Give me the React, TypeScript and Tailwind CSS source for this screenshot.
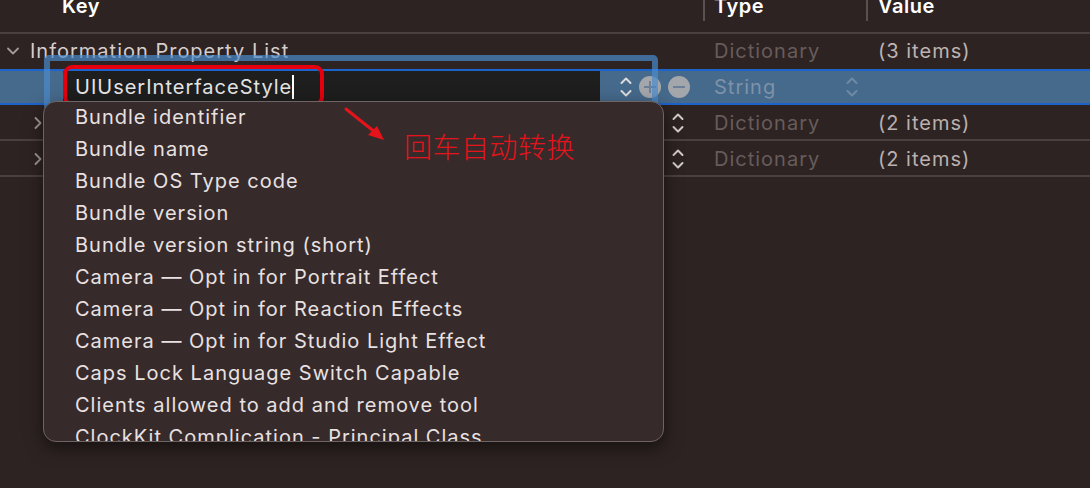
import React from "react";

const font = { fontFamily: '"Inter", "Noto Sans CJK SC", sans-serif' };

const Stepper = ({ color }: { color: string }) => (
  <svg width="14" height="24" viewBox="0 0 14 24" fill="none">
    <path d="M2.5 8 L7 3.5 L11.5 8" stroke={color} strokeWidth="2" strokeLinecap="round" strokeLinejoin="round" />
    <path d="M2.5 16 L7 20.5 L11.5 16" stroke={color} strokeWidth="2" strokeLinecap="round" strokeLinejoin="round" />
  </svg>
);

const Chevron = ({ dir, color }: { dir: "down" | "right"; color: string }) => (
  <svg width="14" height="14" viewBox="0 0 14 14" fill="none">
    {dir === "down" ? (
      <path d="M2 4.5 L7 9.5 L12 4.5" stroke={color} strokeWidth="1.8" strokeLinecap="round" strokeLinejoin="round" />
    ) : (
      <path d="M4.5 2 L9.5 7 L4.5 12" stroke={color} strokeWidth="1.8" strokeLinecap="round" strokeLinejoin="round" />
    )}
  </svg>
);

const items = [
  "Bundle identifier",
  "Bundle name",
  "Bundle OS Type code",
  "Bundle version",
  "Bundle version string (short)",
  "Camera — Opt in for Portrait Effect",
  "Camera — Opt in for Reaction Effects",
  "Camera — Opt in for Studio Light Effect",
  "Caps Lock Language Switch Capable",
  "Clients allowed to add and remove tool",
  "ClockKit Complication - Principal Class",
];

export default function App() {
  return (
    <div className="relative w-[1090px] h-[488px] overflow-hidden bg-[#2d2322] text-[20px] tracking-[1px]" style={font}>
      {/* header */}
      <div className="flex h-[34px] border-b-2 border-[#4a403f]">
        <div className="w-[703px] pl-[62px]">
          <span className="block -mt-[6px] leading-[24px] font-semibold tracking-[0.5px] text-white">Key</span>
        </div>
        <div className="w-[163px] h-[21px] border-l-2 border-[#5a504f] pl-[9px]">
          <span className="block -mt-[6px] leading-[24px] font-semibold tracking-[0.5px] text-white">Type</span>
        </div>
        <div className="flex-1 h-[21px] border-l-2 border-[#5a504f] pl-[10px]">
          <span className="block -mt-[6px] leading-[24px] font-semibold tracking-[0.5px] text-white">Value</span>
        </div>
      </div>

      {/* row 1 */}
      <div className="flex h-[35px] items-center pb-[2px]">
        <div className="flex w-[703px] items-center">
          <div className="ml-[6px] w-[24px]">
            <Chevron dir="down" color="#a39a99" />
          </div>
          <span className="text-[#d6cdcc]">Information Property List</span>
        </div>
        <div className="w-[163px] pl-[11px] text-[#675c5b]">Dictionary</div>
        <div className="flex-1 pl-[12px] text-[#bcb3b2]">(3 items)</div>
      </div>

      {/* row 2 selected */}
      <div className="flex h-[36px] items-center border-y-2 border-[#1d63cc] bg-[#466a8c]">
        <div className="flex w-[703px] items-center">
          <div className="ml-[63px] flex h-[32px] w-[537px] items-center bg-[#1e1e1e] pl-[12px]">
            <span className="text-[#e4e4e4]">UIUserInterfaceStyle</span>
            <span className="h-[24px] w-[2px] bg-white" />
          </div>
          <div className="ml-[19px] flex items-center">
            <Stepper color="#dcdcdc" />
          </div>
          <div className="relative ml-[6px] flex h-[22px] w-[22px] items-center justify-center rounded-full bg-[#a3a6aa]">
            <span className="absolute h-[2.5px] w-[12px] bg-[#6c8199]" />
            <span className="h-[12px] w-[2.5px] bg-[#6c8199]" />
          </div>
          <div className="ml-[7px] flex h-[22px] w-[22px] items-center justify-center rounded-full bg-[#a3a6aa]">
            <span className="h-[2.5px] w-[12px] bg-[#6c8199]" />
          </div>
        </div>
        <div className="flex w-[163px] items-center pl-[11px] text-[#7d92a9]">
          <span className="w-[131px]">String</span>
          <Stepper color="#6f8aa6" />
        </div>
        <div className="flex-1" />
      </div>

      {/* rows 3 & 4 */}
      {[0, 1].map((i) => (
        <div key={i} className="flex h-[36px] items-center border-b-2 border-[#4a403f] pt-[2px]">
          <div className="flex w-[703px] items-center">
            <div className="ml-[31px]">
              <Chevron dir="right" color="#a39a99" />
            </div>
            <div className="ml-[626px] flex items-center">
              <Stepper color="#d2cbcb" />
            </div>
          </div>
          <div className="w-[163px] pl-[11px] text-[#675c5b]">Dictionary</div>
          <div className="flex-1 pl-[12px] text-[#b9b0af]">(2 items)</div>
        </div>
      ))}

      {/* focus ring */}
      <div className="pointer-events-none absolute left-[44px] top-[55px] h-[56px] w-[614px] rounded-[5px] border-[6px] border-[#4a8ccc]/70" />

      {/* red annotation box */}
      <div className="absolute left-[63px] top-[65px] h-[41px] w-[261px] rounded-[9px] border-[4px] border-[#e6000e]" />

      {/* popup */}
      <div className="absolute left-[43px] top-[101px] h-[341px] w-[621px] overflow-hidden rounded-[13px] border border-[#6e6463] bg-[#372a2a] shadow-[0_6px_18px_rgba(0,0,0,0.5)]">
        <div className="-mt-[1px] flex flex-col">
          {items.map((t) => (
            <div key={t} className="flex h-[32px] shrink-0 items-center pl-[31px] text-[#e8e1e1]">
              {t}
            </div>
          ))}
        </div>
      </div>

      {/* arrow */}
      <svg className="absolute left-[340px] top-[104px]" width="50" height="42" viewBox="0 0 50 42">
        <path d="M6 5 L36 29" stroke="#e6131b" strokeWidth="3" strokeLinecap="round" />
        <path d="M44 36 L28 31 L37 22 Z" fill="#e6131b" />
      </svg>

      <div className="absolute left-[404px] top-[128px] text-[28px] leading-[36px] tracking-[0.5px] text-[#e3141b]" style={{ fontFamily: '"Noto Sans CJK SC", sans-serif', fontWeight: 300 }}>
        回车自动转换
      </div>
    </div>
  );
}
